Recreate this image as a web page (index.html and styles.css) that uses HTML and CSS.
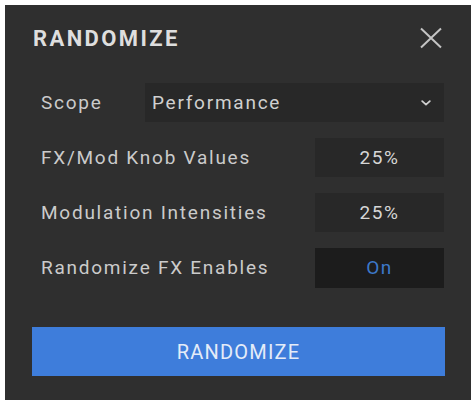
FILE: index.html
```html
<!DOCTYPE html>
<html lang="en">
<head>
<meta charset="utf-8">
<title>Randomize</title>
<link rel="stylesheet" href="styles.css">
</head>
<body>
<div class="panel">
  <div class="header">
    <h1 class="title">RANDOMIZE</h1>
    <button class="close" aria-label="Close">
      <svg width="24" height="22" viewBox="0 0 24 22"><path d="M2 1.5 L22 20.5 M22 1.5 L2 20.5" stroke="#c4c4c4" stroke-width="2" fill="none"/></svg>
    </button>
  </div>
  <div class="rows">
    <div class="row">
      <span class="label scope-label">Scope</span>
      <div class="select">
        <span>Performance</span>
        <svg class="chev" width="10" height="6" viewBox="0 0 10 6"><path d="M1.2 1.2 L5 4.6 L8.8 1.2" stroke="#cfcfcf" stroke-width="1.8" fill="none" stroke-linecap="round" stroke-linejoin="round"/></svg>
      </div>
    </div>
    <div class="row">
      <span class="label">FX/Mod Knob Values</span>
      <div class="value">25%</div>
    </div>
    <div class="row">
      <span class="label">Modulation Intensities</span>
      <div class="value">25%</div>
    </div>
    <div class="row">
      <span class="label">Randomize FX Enables</span>
      <div class="value value-on">On</div>
    </div>
  </div>
  <button class="go">RANDOMIZE</button>
</div>
</body>
</html>
```

FILE: styles.css
```css
html, body {
  margin: 0;
  background: #ffffff;
}
body {
  padding: 5px 3px 4px 5px;
  font-family: Roboto, "Liberation Sans", sans-serif;
}
.panel {
  width: 466px;
  height: 395px;
  box-sizing: border-box;
  background: #2f2f2f;
  padding: 0 27px 23px 27px;
  display: flex;
  flex-direction: column;
}
.header {
  height: 66px;
  margin-bottom: 12px;
  display: flex;
  align-items: center;
  justify-content: space-between;
}
.title {
  margin: 0 0 0 1px;
  font-size: 22px;
  font-weight: 700;
  letter-spacing: 2.4px;
  color: #dedede;
}
.close {
  background: none;
  border: 0;
  padding: 0;
  margin-right: 1px;
  width: 24px;
  height: 22px;
  display: flex;
}
.rows {
  display: flex;
  flex-direction: column;
  gap: 16px;
}
.row {
  display: flex;
  align-items: center;
  height: 39px;
}
.label {
  flex: 1;
  padding-left: 9px;
  font-size: 19px;
  letter-spacing: 1.75px;
  color: #cbcbcb;
}
.scope-label {
  flex: 0 0 113px;
  box-sizing: border-box;
}
.select {
  flex: 1;
  height: 39px;
  background: #282828;
  display: flex;
  align-items: center;
  justify-content: space-between;
  padding: 0 13px 0 7px;
  font-size: 19px;
  letter-spacing: 1.75px;
  color: #d0d0d0;
}
.chev {
  display: block;
}
.value {
  width: 129px;
  height: 39px;
  background: #282828;
  display: flex;
  align-items: center;
  justify-content: center;
  font-size: 19px;
  letter-spacing: 1.5px;
  color: #d6d6d6;
}
.value-on {
  height: 40px;
  background: #1c1c1c;
  color: #3c78c8;
}
.go {
  margin-top: 40px;
  height: 49px;
  border: 0;
  background: #3e7ddb;
  color: #e4ecf8;
  font-family: Roboto, "Liberation Sans", sans-serif;
  font-size: 20px;
  letter-spacing: 1.2px;
  width: 413px;
  margin-left: 0;
}
```
